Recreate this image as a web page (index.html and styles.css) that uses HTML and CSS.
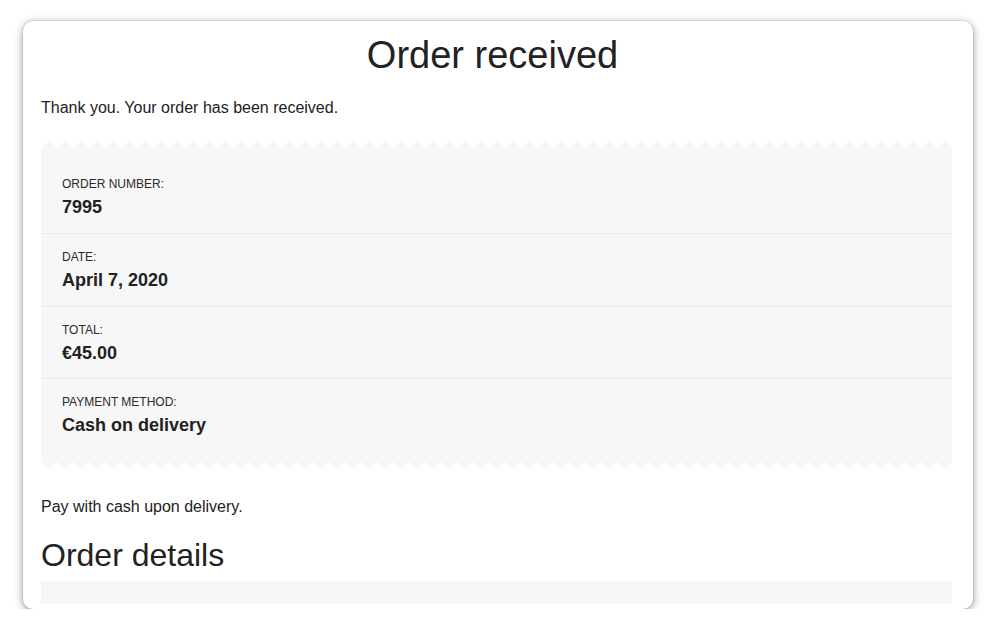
FILE: index.html
```html
<!DOCTYPE html>
<html lang="en">
<head>
<meta charset="utf-8">
<title>Order received</title>
<link rel="stylesheet" href="styles.css">
</head>
<body>
<div class="card">
  <h1 class="title">Order received</h1>
  <p class="notice">Thank you. Your order has been received.</p>
  <div class="receipt">
    <div class="zig zig-top"></div>
    <ul class="rows">
      <li class="row"><span class="label">Order number:</span><strong class="value">7995</strong></li>
      <li class="row"><span class="label">Date:</span><strong class="value">April 7, 2020</strong></li>
      <li class="row"><span class="label">Total:</span><strong class="value">€45.00</strong></li>
      <li class="row"><span class="label">Payment method:</span><strong class="value">Cash on delivery</strong></li>
    </ul>
    <div class="zig zig-bottom"></div>
  </div>
  <p class="pay">Pay with cash upon delivery.</p>
  <h2 class="subtitle">Order details</h2>
  <div class="details"></div>
</div>
</body>
</html>
```
FILE: styles.css
```css
html, body {
  margin: 0;
  padding: 0;
  background: #ffffff;
}
body {
  font-family: "Liberation Sans", Arial, Helvetica, sans-serif;
  color: #222;
  padding: 21px 23px 0 23px;
}
.card {
  width: 950px;
  height: 588px;
  box-sizing: border-box;
  background: #fff;
  border-radius: 10px;
  box-shadow: 0 0 0 1px rgba(0,0,0,0.06), 0 2px 9px rgba(0,0,0,0.42);
  padding: 12px 21px 0 18px;
  overflow: hidden;
  display: flex;
  flex-direction: column;
}
.title {
  margin: 0;
  font-size: 38px;
  line-height: 44px;
  font-weight: 400;
  text-align: center;
  padding-right: 8px;
}
.notice {
  margin: 19px 0 0;
  font-size: 16px;
  line-height: 24px;
}
.receipt {
  margin-top: 20px;
  display: flex;
  flex-direction: column;
}
.zig {
  height: 8px;
  background-repeat: repeat-x;
  background-size: 16px 8px;
}
.zig-top {
  background-image: conic-gradient(from 135deg at 50% 0, #f7f7f7 90deg, transparent 0);
}
.zig-bottom {
  background-image: conic-gradient(from -45deg at 50% 100%, #f7f7f7 90deg, transparent 0);
}
.rows {
  list-style: none;
  margin: 0;
  background: #f7f7f7;
  padding: 13px 0 9px;
  display: flex;
  flex-direction: column;
}
.row {
  display: flex;
  flex-direction: column;
  gap: 3px;
  padding: 15px 21px 14px;
  border-bottom: 1px dotted #dedede;
}
.row:nth-child(3) {
  padding-bottom: 13px;
}
.row:last-child {
  border-bottom: 0;
  padding-bottom: 15px;
}
.label {
  font-size: 12px;
  line-height: 16px;
  text-transform: uppercase;
  color: #2a2a2a;
}
.value {
  font-size: 18px;
  line-height: 24px;
  font-weight: 700;
}
.pay {
  margin: 26px 0 0;
  font-size: 16px;
  line-height: 24px;
}
.subtitle {
  margin: 17px 0 0;
  font-size: 32px;
  line-height: 38px;
  font-weight: 400;
}
.details {
  margin-top: 7px;
  height: 23px;
  background: #f7f7f7;
}
```
